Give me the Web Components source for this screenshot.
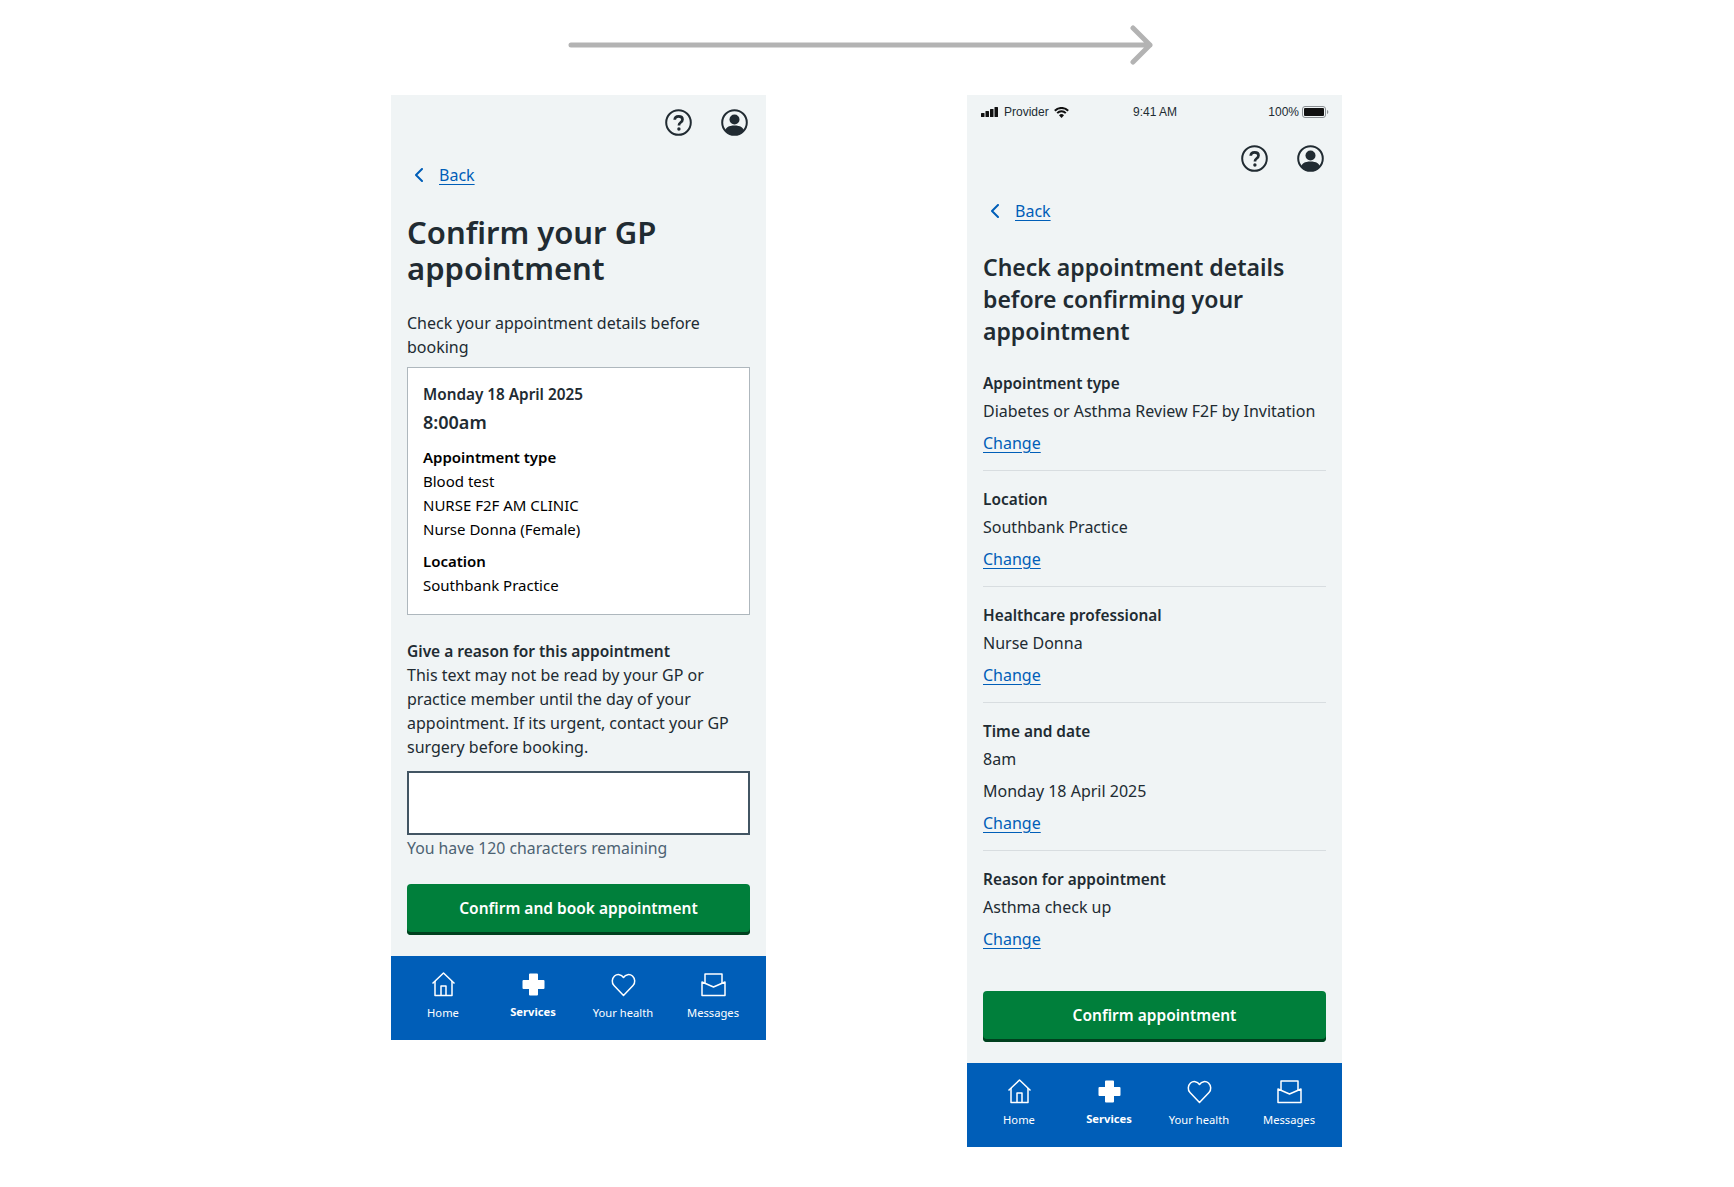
<!doctype html>
<html lang="en">
<head>
<meta charset="utf-8">
<title>Appointment flow</title>
<style>
  html, body { margin: 0; background: #fff; }
  body { font-family: "Noto Sans", sans-serif; color: #212b32; width: 1734px; height: 1187px; overflow: hidden; }
  .stage { display: flex; align-items: flex-start; gap: 201px; padding-left: 391px; }
  flow-arrow { margin-left: 568px; }
</style>
</head>
<body>

<template id="back-tpl">
  <style>
    :host { display: flex; align-items: center; height: 24px; padding-left: 24px; gap: 16px; color: #005eb8; font-size: 16px; }
    a { color: inherit; text-underline-offset: 3px; }
    svg { display: block; }
  </style>
  <svg width="8" height="14" viewBox="0 0 8 14" fill="none" stroke="currentColor" stroke-width="2" stroke-linecap="round" stroke-linejoin="round"><path d="M7 1 1 7l6 6"/></svg>
  <a href="#"><slot></slot></a>
</template>

<template id="top-tpl">
  <style>
    :host { display: flex; justify-content: flex-end; gap: 29px; padding-right: 18px; }
    svg { display: block; }
  </style>
  <svg width="27" height="27" viewBox="0 0 27 27"><circle cx="13.5" cy="13.5" r="12.3" fill="none" stroke="#212b32" stroke-width="2"/><path d="M9.700 10.800c.1-2.100 1.700-3.400 3.900-3.400 2.300 0 3.900 1.300 3.900 3.100 0 1.400-.8 2.200-1.900 3-1.100.8-1.600 1.400-1.600 2.600v.4" fill="none" stroke="#212b32" stroke-width="2.700"/><circle cx="13.900" cy="20" r="1.700" fill="#212b32"/></svg>
  <svg width="27" height="27" viewBox="0 0 27 27"><defs><clipPath id="c"><circle cx="13.500" cy="13.500" r="12"/></clipPath></defs><circle cx="13.500" cy="13.500" r="12.300" fill="none" stroke="#212b32" stroke-width="2"/><g fill="#212b32" clip-path="url(#c)"><circle cx="13.500" cy="10.500" r="5"/><path d="M4 27v-4c0-4.500 4-6.500 9.500-6.500S23 18.500 23 23v4z"/></g></svg>
</template>

<template id="status-tpl">
  <style>
    :host { display: flex; align-items: center; height: 34px; padding: 0 13px 0 14px; font: 12px "Liberation Sans", sans-serif; color: #212b32; position: relative; }
    .l { display: flex; align-items: center; gap: 6px; flex: 1; }
    .c { flex: 1; text-align: center; }
    .r { display: flex; align-items: center; justify-content: flex-end; gap: 3px; flex: 1; }
    svg { display: block; }
  </style>
  <div class="l">
    <svg width="17" height="10" viewBox="0 0 17 10" fill="#111"><rect x="0" y="6" width="3.500" height="4" rx=".5"/><rect x="4.500" y="4" width="3.500" height="6" rx=".5"/><rect x="9" y="2" width="3.500" height="8" rx=".5"/><rect x="13.500" y="0" width="3.500" height="10" rx=".5"/></svg>
    <span>Provider</span>
    <svg width="15" height="11" viewBox="0 0 15 11" fill="none" stroke="#111" stroke-width="2" style="margin-left:-1px"><path d="M.8 3.700a9.500 9.500 0 0 1 13.400 0M3.200 6.100a6 6 0 0 1 8.600 0"/><path d="M7.500 11 5 8.300a3.600 3.600 0 0 1 5 0z" fill="#111" stroke="none"/></svg>
  </div>
  <div class="c">9:41 AM</div>
  <div class="r">
    <span>100%</span>
    <svg width="27" height="12" viewBox="0 0 27 12"><rect x=".5" y=".5" width="23" height="11" rx="2.500" fill="none" stroke="#8a8f93"/><rect x="2" y="2" width="20" height="8" rx="1" fill="#111"/><path d="M25 4v4c.8-.3 1.300-1 1.300-2s-.5-1.700-1.300-2z" fill="#8a8f93"/></svg>
  </div>
</template>

<template id="btn-tpl">
  <style>
    :host { display: block; }
    button { display: block; width: 100%; height: 51px; padding: 0 0 3px; border: 0; border-radius: 4px; background: #007f3b; box-shadow: inset 0 -3px 0 #00401e; color: #fff; font: 600 15.5px "Noto Sans", sans-serif; }
  </style>
  <button type="button"><slot></slot></button>
</template>

<template id="nav-tpl">
  <style>
    :host { display: grid; grid-template-columns: repeat(4, 90px); height: 84px; padding-left: 7px; background: #005eb8; color: #fff; font-size: 11.2px; }
    div { display: flex; flex-direction: column; align-items: center; padding-top: 16px; }
    svg { display: block; width: 25px; height: 25px; margin-bottom: 8px; }
    span { line-height: 16px; }
    .on { font-weight: 700; margin-top: -1px; }
  </style>
  <div><svg viewBox="0 0 25 25" fill="none" stroke="#fff" stroke-width="1.500" stroke-linejoin="round"><path d="M1.500 11.500 12.500 1l11 10.500"/><path d="M4 9v14.500h17V9"/><path d="M10 23.500V14h5v9.500"/></svg><span>Home</span></div>
  <div><svg viewBox="0 0 25 25" fill="#fff"><path d="M9 1.500h7a1 1 0 0 1 1 1V8h5.500a1 1 0 0 1 1 1v7a1 1 0 0 1-1 1H17v5.500a1 1 0 0 1-1 1H9a1 1 0 0 1-1-1V17H2.500a1 1 0 0 1-1-1V9a1 1 0 0 1 1-1H8V2.500a1 1 0 0 1 1-1z"/></svg><span class="on">Services</span></div>
  <div><svg viewBox="0 0 25 25" fill="none" stroke="#fff" stroke-width="1.500" stroke-linejoin="round"><path d="M12.500 23.500 3 13.500C.5 10.800.8 6.500 3.500 4c2.800-2.300 6.800-1.800 9 1.500 2.200-3.300 6.200-3.800 9-1.500 2.700 2.500 3 6.800.5 9.500z"/></svg><span>Your health</span></div>
  <div><svg viewBox="0 0 25 25" fill="none" stroke="#fff" stroke-width="1.500" stroke-linejoin="round"><path d="M4 11V2h17v9"/><path d="M1 10l11.500 5L24 10v13.500H1z"/></svg><span>Messages</span></div>
</template>

<template id="phone-tpl">
  <style>
    :host { display: block; width: 375px; background: #f0f4f5; }
    .body { display: block; padding: 0 16px; }
  </style>
  <slot name="status"></slot>
  <slot name="top"></slot>
  <slot name="back"></slot>
  <div class="body"><slot></slot></div>
  <slot name="nav"></slot>
</template>

<template id="detail-tpl">
  <style>
    :host { display: block; border-bottom: 1px solid #d8dde0; height: 116px; box-sizing: border-box; padding-top: 17px; font-size: 16px; line-height: 32px; }
    :host([last]) { border-bottom: 0; height: auto; }
    :host([tall]) { height: 148px; }
    .k { font-weight: 600; font-size: 15.4px; height: 23px; line-height: 24px; }
    a { color: #005eb8; text-underline-offset: 3px; display: block; }
    ::slotted(*) { display: block; }
  </style>
  <div class="k"><slot name="k"></slot></div>
  <slot></slot>
  <a href="#">Change</a>
</template>

<template id="summary-tpl">
  <style>
    :host { display: block; background: #fff; border: 1px solid #aeb7bd; height: 248px; box-sizing: border-box; padding: 14px 15px 0; font-size: 15px; line-height: 24px; color: #000; }
    .date { font-weight: 600; font-size: 15.3px; color: #212b32; }
    .time { font-weight: 600; font-size: 18px; line-height: 33px; color: #212b32; }
    b { display: block; font-weight: 600; }
    .a { margin-top: 6px; }
    .b { margin-top: 8px; }
  </style>
  <div class="date">Monday 18 April 2025</div>
  <div class="time">8:00am</div>
  <div class="a"><b>Appointment type</b>Blood test<br>NURSE F2F AM CLINIC<br>Nurse Donna (Female)</div>
  <div class="b"><b>Location</b>Southbank Practice</div>
</template>

<template id="reason-tpl">
  <style>
    :host { display: block; font-size: 16px; line-height: 24px; }
    b { display: block; font-weight: 600; font-size: 15.5px; }
    .box { display: block; height: 64px; box-sizing: border-box; margin-top: 12px; background: #fff; border: 2px solid #425563; }
    .hint { color: #4c6272; font-size: 15.8px; line-height: 25px; padding-top: 1px; }
  </style>
  <b>Give a reason for this appointment</b>
  <slot></slot>
  <div class="box"></div>
  <div class="hint">You have 120 characters remaining</div>
</template>

<template id="arrow-tpl">
  <style>:host { display: block; height: 95px; } svg { display: block; }</style>
  <svg width="590" height="95" viewBox="0 0 590 95" fill="none" stroke="#b3b3b3" stroke-width="5" stroke-linecap="round" stroke-linejoin="round"><path d="M3 45h579M565 28l17 17-17 17"/></svg>
</template>

<flow-arrow></flow-arrow>
<div class="stage">
  <app-phone style="padding-top:14px">
    <app-top slot="top"></app-top>
    <back-link slot="back" style="margin-top:27px">Back</back-link>
    <h1 style="margin:27px 0 0;font-size:31px;line-height:36px;font-weight:600">Confirm your GP<br>appointment</h1>
    <p style="margin:25px 0 8px;font-size:16px;line-height:24px">Check your appointment details before booking</p>
    <appt-summary></appt-summary>
    <reason-field style="margin-top:24px">This text may not be read by your GP or practice member until the day of your appointment. If its urgent, contact your GP surgery before booking.</reason-field>
    <nhs-button style="margin-top:23px;padding-bottom:21px">Confirm and book appointment</nhs-button>
    <app-nav slot="nav"></app-nav>
  </app-phone>

  <app-phone>
    <status-bar slot="status"></status-bar>
    <app-top slot="top" style="margin-top:16px"></app-top>
    <back-link slot="back" style="margin-top:27px">Back</back-link>
    <h1 style="margin:28px 0 0;font-size:23px;line-height:32px;font-weight:600">Check appointment details before confirming your appointment</h1>
    <appt-detail style="margin-top:8px"><span slot="k">Appointment type</span><span>Diabetes or Asthma Review F2F by Invitation</span></appt-detail>
    <appt-detail><span slot="k">Location</span><span>Southbank Practice</span></appt-detail>
    <appt-detail><span slot="k">Healthcare professional</span><span>Nurse Donna</span></appt-detail>
    <appt-detail tall><span slot="k">Time and date</span><span>8am</span><span>Monday 18 April 2025</span></appt-detail>
    <appt-detail last><span slot="k">Reason for appointment</span><span>Asthma check up</span></appt-detail>
    <nhs-button style="margin-top:36px;padding-bottom:21px">Confirm appointment</nhs-button>
    <app-nav slot="nav"></app-nav>
  </app-phone>
</div>

<script>
  // every element just clones its template into an open shadow root
  const parts = {
    "flow-arrow": "arrow-tpl",
    "back-link": "back-tpl",
    "app-top": "top-tpl",
    "status-bar": "status-tpl",
    "nhs-button": "btn-tpl",
    "app-nav": "nav-tpl",
    "app-phone": "phone-tpl",
    "appt-detail": "detail-tpl",
    "appt-summary": "summary-tpl",
    "reason-field": "reason-tpl"
  };
  Object.keys(parts).forEach(name => {
    customElements.define(name, class extends HTMLElement {
      constructor() {
        super();
        this.attachShadow({ mode: "open" });
        this.shadowRoot.appendChild(document.getElementById(parts[name]).content.cloneNode(true));
      }
    });
  });
</script>
</body>
</html>
